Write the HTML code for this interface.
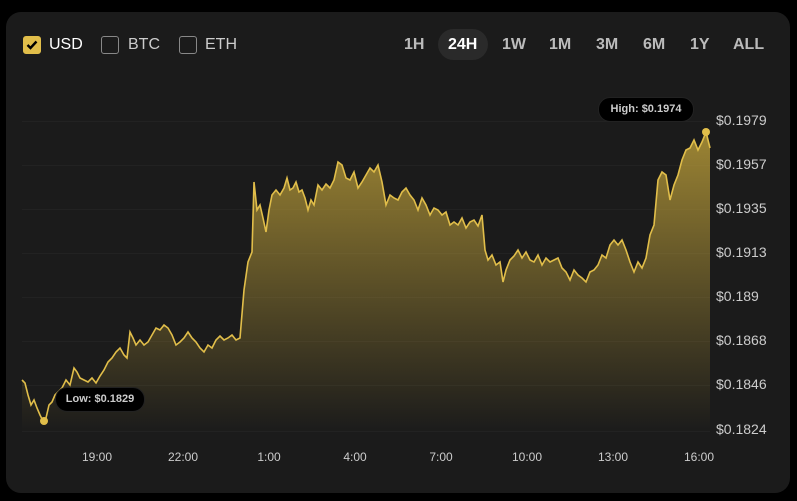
<!DOCTYPE html><html><head><style>
body{margin:0;background:#000;width:797px;height:501px;overflow:hidden;font-family:"Liberation Sans",sans-serif}
.card{position:absolute;left:6px;top:12px;width:784px;height:481px;background:#1b1b1b;border-radius:15px}
.cb{position:absolute;top:36px;width:16px;height:16px;border:1.5px solid #888;border-radius:3px}
.lbl{position:absolute;top:36px;font-size:16px;color:#ccc}
.r{position:absolute;top:36px;font-size:16px;color:#bbb;font-weight:bold}
.yl{position:absolute;left:716px;font-size:14px;color:#ccc}
.xl{position:absolute;top:450px;font-size:12px;color:#ccc;transform:translateX(-50%)}
.tip{position:absolute;background:#000;color:#ccc;font-size:11px;font-weight:bold;border-radius:12px;border:1px solid #222;line-height:23px;text-align:center}
</style></head><body>
<div class="card"></div>
<div class="cb" style="left:23px;background:#e1be4a;border-color:#e1be4a"><svg width="16" height="16" style="position:absolute;left:0;top:0"><path d="M3.5 8l3 3 6-6.5" stroke="#000" stroke-width="2.4" fill="none"/></svg></div>
<div class="lbl" style="left:49px;color:#fff">USD</div>
<div class="cb" style="left:101px"></div><div class="lbl" style="left:128px">BTC</div>
<div class="cb" style="left:179px"></div><div class="lbl" style="left:205px">ETH</div>
<div style="position:absolute;left:438px;top:29px;width:50px;height:31px;background:#2a2a2a;border-radius:16px"></div>
<div class="r" style="left:404px">1H</div><div class="r" style="left:448px;color:#fff">24H</div><div class="r" style="left:502px">1W</div><div class="r" style="left:549px">1M</div><div class="r" style="left:596px">3M</div><div class="r" style="left:643px">6M</div><div class="r" style="left:690px">1Y</div><div class="r" style="left:733px">ALL</div>
<svg width="797" height="501" style="position:absolute;left:0;top:0">
<defs><linearGradient id="g" x1="0" y1="130" x2="0" y2="432" gradientUnits="userSpaceOnUse"><stop offset="0" stop-color="#c9a93c" stop-opacity=".75"/><stop offset="1" stop-color="#c9a93c" stop-opacity="0"/></linearGradient></defs>
<g stroke="#222" stroke-width="1"><path d="M22 121.5H710M22 165.5H710M22 209.5H710M22 253.5H710M22 297.5H710M22 341.5H710M22 385.5H710M22 431.5H710"/></g>
<path id="p" d="M22,380 25,383 28,395 31,405 34,400 37,408 40,415 43,421 46,418 49,405 52,402 55,395 58,392 62,388 66,380 70,385 74,368 77,372 80,378 84,380 88,382 92,378 96,383 100,376 104,370 108,362 112,358 116,352 120,348 124,355 127,358 130,332 133,338 136,345 140,340 144,345 148,342 152,335 156,328 160,330 164,325 168,328 172,335 176,345 180,342 184,338 188,332 192,338 196,342 200,348 204,352 208,345 212,348 216,340 220,336 224,340 228,338 232,335 236,340 240,338 244,290 248,262 252,252 254,182 257,210 260,205 263,218 266,232 269,210 272,195 276,190 280,195 284,188 287,178 290,190 293,188 296,182 299,192 302,190 305,198 308,210 311,200 314,205 318,185 322,190 326,184 330,188 334,180 338,162 342,165 346,178 350,180 354,172 358,188 362,182 366,175 370,168 374,172 378,165 382,182 386,205 390,195 394,198 398,200 402,192 406,188 410,195 414,200 418,210 422,198 426,205 430,215 434,208 438,210 442,215 446,212 450,225 454,222 458,225 462,218 466,228 470,222 474,220 478,226 482,215 485,250 488,260 492,255 496,265 500,262 503,282 506,270 510,260 514,256 518,250 522,258 526,252 530,260 534,262 538,255 542,265 546,258 550,262 554,260 558,258 562,268 566,272 570,280 574,270 578,275 582,278 586,282 590,272 594,270 598,265 602,255 606,258 610,245 614,240 618,245 622,240 626,250 630,262 634,272 638,262 642,268 646,258 650,235 654,225 658,180 662,172 666,175 670,200 674,185 678,175 682,160 686,150 690,148 694,140 698,150 702,142 706,132 710,148" fill="none"/>
<path d="M22,380 25,383 28,395 31,405 34,400 37,408 40,415 43,421 46,418 49,405 52,402 55,395 58,392 62,388 66,380 70,385 74,368 77,372 80,378 84,380 88,382 92,378 96,383 100,376 104,370 108,362 112,358 116,352 120,348 124,355 127,358 130,332 133,338 136,345 140,340 144,345 148,342 152,335 156,328 160,330 164,325 168,328 172,335 176,345 180,342 184,338 188,332 192,338 196,342 200,348 204,352 208,345 212,348 216,340 220,336 224,340 228,338 232,335 236,340 240,338 244,290 248,262 252,252 254,182 257,210 260,205 263,218 266,232 269,210 272,195 276,190 280,195 284,188 287,178 290,190 293,188 296,182 299,192 302,190 305,198 308,210 311,200 314,205 318,185 322,190 326,184 330,188 334,180 338,162 342,165 346,178 350,180 354,172 358,188 362,182 366,175 370,168 374,172 378,165 382,182 386,205 390,195 394,198 398,200 402,192 406,188 410,195 414,200 418,210 422,198 426,205 430,215 434,208 438,210 442,215 446,212 450,225 454,222 458,225 462,218 466,228 470,222 474,220 478,226 482,215 485,250 488,260 492,255 496,265 500,262 503,282 506,270 510,260 514,256 518,250 522,258 526,252 530,260 534,262 538,255 542,265 546,258 550,262 554,260 558,258 562,268 566,272 570,280 574,270 578,275 582,278 586,282 590,272 594,270 598,265 602,255 606,258 610,245 614,240 618,245 622,240 626,250 630,262 634,272 638,262 642,268 646,258 650,235 654,225 658,180 662,172 666,175 670,200 674,185 678,175 682,160 686,150 690,148 694,140 698,150 702,142 706,132 710,148 710,432 22,432Z" fill="url(#g)"/>
<use href="#p" stroke="#e1be4a" stroke-width="1.6"/>
<circle cx="706" cy="132" r="4" fill="#e1be4a"/><circle cx="44" cy="421" r="4" fill="#e1be4a"/>
</svg>
<div class="tip" style="left:598px;top:97px;width:94px">High: $0.1974</div>
<div class="tip" style="left:55px;top:387px;width:88px">Low: $0.1829</div>
<div class="yl" style="top:112px">$0.1979</div><div class="yl" style="top:156px">$0.1957</div><div class="yl" style="top:200px">$0.1935</div><div class="yl" style="top:244px">$0.1913</div><div class="yl" style="top:288px">$0.189</div><div class="yl" style="top:332px">$0.1868</div><div class="yl" style="top:376px">$0.1846</div><div class="yl" style="top:421px">$0.1824</div>
<div class="xl" style="left:97px">19:00</div><div class="xl" style="left:183px">22:00</div><div class="xl" style="left:269px">1:00</div><div class="xl" style="left:355px">4:00</div><div class="xl" style="left:441px">7:00</div><div class="xl" style="left:527px">10:00</div><div class="xl" style="left:613px">13:00</div><div class="xl" style="left:699px">16:00</div>
</body></html>
